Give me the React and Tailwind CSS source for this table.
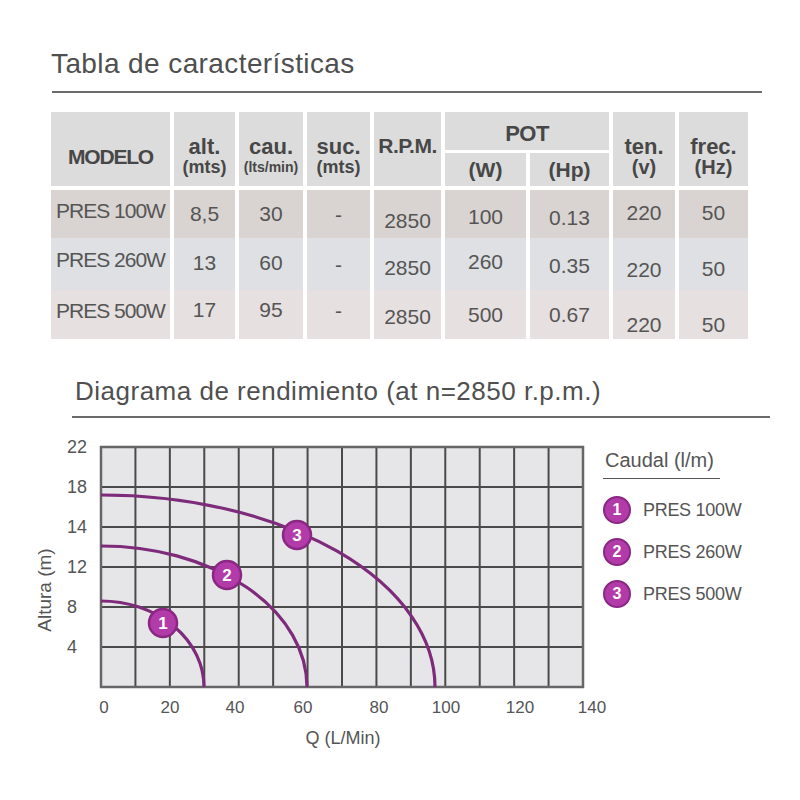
import React from 'react';

const COLS = 'grid grid-cols-[119px_61px_64px_63px_67px_81px_79px_62px_69px] gap-x-[4px]';

const rows = [
    {
        bg: 'bg-[#d9d4d1]',
        h: 'h-[48px]',
        cells: [
            ['PRES 100W', 'pt-[9px]'],
            ['8,5', 'pt-[12px]'],
            ['30', 'pt-[12px]'],
            ['-', 'pt-[13px]'],
            ['2850', 'pt-[19px]'],
            ['100', 'pt-[15px]'],
            ['0.13', 'pt-[16px]'],
            ['220', 'pt-[11px]'],
            ['50', 'pt-[11px]'],
        ],
    },
    {
        bg: 'bg-[#dee0e3]',
        h: 'h-[52px]',
        cells: [
            ['PRES 260W', 'pt-[10px]'],
            ['13', 'pt-[13px]'],
            ['60', 'pt-[13px]'],
            ['-', 'pt-[15px]'],
            ['2850', 'pt-[18px]'],
            ['260', 'pt-[12px]'],
            ['0.35', 'pt-[16px]'],
            ['220', 'pt-[20px]'],
            ['50', 'pt-[19px]'],
        ],
    },
    {
        bg: 'bg-[#e6e0e0]',
        h: 'h-[49px]',
        cells: [
            ['PRES 500W', 'pt-[9px]'],
            ['17', 'pt-[8px]'],
            ['95', 'pt-[8px]'],
            ['-', 'pt-[9px]'],
            ['2850', 'pt-[15px]'],
            ['500', 'pt-[13px]'],
            ['0.67', 'pt-[13px]'],
            ['220', 'pt-[23px]'],
            ['50', 'pt-[23px]'],
        ],
    },
];

// two-line header cell (name + unit)
function HeadCell({ top, unit, unitSize = 'text-[18px]' }) {
    return (
        <div className="row-span-2 bg-[#dcdcdc] flex flex-col items-center justify-center pt-[16px] font-bold text-[#474747]">
            <span className="text-[22px] leading-[20px]">{top}</span>
            <span className={`${unitSize} leading-[20px]`}>{unit}</span>
        </div>
    );
}

function SpecTable() {
    return (
        <div className="ml-[51px] mt-[19px]">
            <div className={`${COLS} grid-rows-[38px_33px] gap-y-[3px]`}>
                <div className="row-span-2 bg-[#dcdcdc] flex items-center justify-center pt-[16px] font-bold text-[21px] tracking-[-1.2px] text-[#474747]">
                    MODELO
                </div>
                <HeadCell top="alt." unit="(mts)" />
                <HeadCell top="cau." unit="(lts/min)" unitSize="text-[14px]" />
                <HeadCell top="suc." unit="(mts)" />
                <div className="row-span-2 bg-[#dcdcdc] flex items-center justify-center pb-[7px] font-bold text-[21px] tracking-[-0.5px] text-[#474747]">
                    R.P.M.
                </div>
                <div className="col-span-2 bg-[#dcdcdc] flex items-center justify-center pt-[4px] font-bold text-[22px] tracking-[-0.5px] text-[#474747]">
                    POT
                </div>
                <HeadCell top="ten." unit="(v)" unitSize="text-[20px]" />
                <HeadCell top="frec." unit="(Hz)" unitSize="text-[20px]" />
                <div className="bg-[#dcdcdc] flex items-center justify-center font-bold text-[21px] text-[#474747]">(W)</div>
                <div className="bg-[#dcdcdc] flex items-center justify-center font-bold text-[21px] text-[#474747]">(Hp)</div>
            </div>

            <div className="mt-[4px]">
                {rows.map((row, r) => (
                    <div key={r} className={`${COLS} ${row.h}`}>
                        {row.cells.map(([txt, pad], i) => (
                            <div
                                key={i}
                                className={`${row.bg} ${pad} text-[21px] leading-[24px] text-[#555] ${i === 0 ? 'pl-[5px] tracking-[-1px]' : 'text-center'}`}
                            >
                                {txt}
                            </div>
                        ))}
                    </div>
                ))}
            </div>
        </div>
    );
}

const X0 = 101;
const X1 = 583;
const Y0 = 17;
const Y1 = 257;
const CW = (X1 - X0) / 14;

const curves = [
    { start: 171, end: 204, badge: [163, 193], n: '1' },
    { start: 116, end: 307, badge: [227, 145], n: '2' },
    { start: 65, end: 435, badge: [297, 105], n: '3' },
];

const yTicks = [
    ['22', 17],
    ['18', 57],
    ['14', 97],
    ['12', 137],
    ['8', 177],
    ['4', 217],
];

const xTicks = [
    ['0', 104],
    ['20', 170],
    ['40', 235],
    ['60', 303],
    ['80', 379],
    ['100', 446],
    ['120', 520],
    ['140', 592],
];

function Chart() {
    return (
        <svg width="600" height="330" className="shrink-0 overflow-visible" style={{ fontFamily: "'Liberation Sans', Arial, sans-serif" }}>
            <rect x={X0} y={Y0} width={X1 - X0} height={Y1 - Y0} fill="#e6e6e8" />
            {Array.from({ length: 13 }).map((_, i) => (
                <line key={'v' + i} x1={X0 + (i + 1) * CW} x2={X0 + (i + 1) * CW} y1={Y0} y2={Y1} stroke="#4a4a4a" strokeWidth="2" />
            ))}
            {[1, 2, 3, 4, 5].map((i) => (
                <line key={'h' + i} x1={X0} x2={X1} y1={Y0 + i * 40} y2={Y0 + i * 40} stroke="#4a4a4a" strokeWidth="2" />
            ))}
            <rect x={X0} y={Y0} width={X1 - X0} height={Y1 - Y0} fill="none" stroke="#666" strokeWidth="2.5" />

            {curves.map((c) => (
                <path
                    key={c.n}
                    d={`M ${X0} ${c.start} A ${c.end - X0} ${Y1 - c.start} 0 0 1 ${c.end} ${Y1}`}
                    fill="none"
                    stroke="#7d2b7a"
                    strokeWidth="3.2"
                />
            ))}
            {curves.map((c) => (
                <g key={'b' + c.n}>
                    <circle cx={c.badge[0]} cy={c.badge[1]} r="14" fill="#b23ba9" stroke="#8a2783" strokeWidth="2.5" />
                    <text x={c.badge[0]} y={c.badge[1] + 6} textAnchor="middle" fill="#fff" fontSize="17" fontWeight="bold">
                        {c.n}
                    </text>
                </g>
            ))}

            {yTicks.map(([t, y]) => (
                <text key={t} x="67" y={y + 6} fill="#555" fontSize="18">
                    {t}
                </text>
            ))}
            {xTicks.map(([t, x]) => (
                <text key={t} x={x} y="283" textAnchor="middle" fill="#555" fontSize="17">
                    {t}
                </text>
            ))}
            <text x="343" y="314" textAnchor="middle" fill="#555" fontSize="18">
                Q (L/Min)
            </text>
            <text x="51" y="160" textAnchor="middle" fill="#555" fontSize="19" transform="rotate(-90 51 160)">
                Altura (m)
            </text>
        </svg>
    );
}

function Badge({ n }) {
    return (
        <div className="w-[28px] h-[28px] rounded-full bg-[#b23ba9] border-[2.5px] border-[#8a2783] flex items-center justify-center text-white font-bold text-[16px] leading-none">
            {n}
        </div>
    );
}

function Legend() {
    return (
        <div className="pl-[3px] pt-[18px]">
            <div className="w-[117px] border-b-[1.5px] border-[#555] pb-[6px] pl-[2px] text-[20px] leading-[24px] text-[#555]">
                Caudal (l/m)
            </div>
            <div className="mt-[17px] flex flex-col gap-[14px]">
                {['PRES 100W', 'PRES 260W', 'PRES 500W'].map((m, i) => (
                    <div key={m} className="flex items-center gap-[12px]">
                        <Badge n={i + 1} />
                        <span className="text-[18px] tracking-[-0.3px] text-[#555]">{m}</span>
                    </div>
                ))}
            </div>
        </div>
    );
}

export default function App() {
    return (
        <div className="w-[800px] h-[800px] bg-white overflow-hidden font-['Liberation_Sans',Arial,sans-serif]">
            <div className="pl-[51px] pt-[48px] text-[28px] leading-[32px] tracking-[0.4px] text-[#4f4f4f]">
                Tabla de características
            </div>
            <div className="ml-[52px] mt-[11px] h-[2px] w-[710px] bg-[#6b6b6b]" />

            <SpecTable />

            <div className="pl-[75px] mt-[37px] text-[26px] leading-[30px] tracking-[0.5px] text-[#4f4f4f]">
                Diagrama de rendimiento (at n=2850 r.p.m.)
            </div>
            <div className="ml-[72px] mt-[10px] h-[2px] w-[698px] bg-[#6b6b6b]" />

            <div className="flex mt-[12px]">
                <Chart />
                <Legend />
            </div>
        </div>
    );
}
